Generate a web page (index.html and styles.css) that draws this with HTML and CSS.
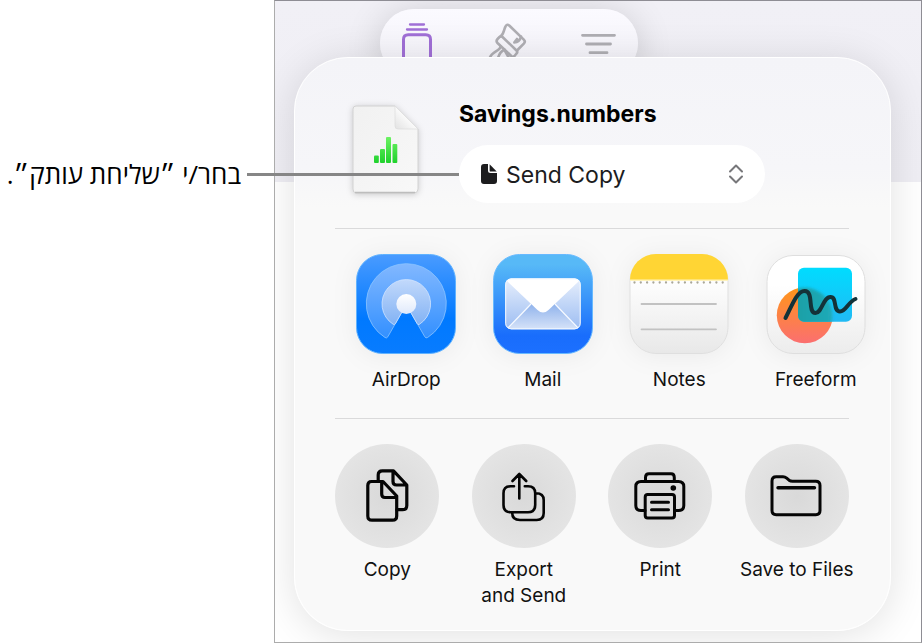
FILE: index.html
```html
<!DOCTYPE html>
<html lang="he">
<head>
<meta charset="utf-8">
<title>Savings.numbers</title>
<link rel="stylesheet" href="styles.css">
</head>
<body>
<main class="figure">
  <div class="callout">
    <p class="callout-text" dir="rtl">בחר/י ״שליחת עותק״.</p>
    <span class="leader"></span>
  </div>
  <div class="screen" lang="en">
    <div class="toolbar">
      <button type="button" class="tool tool-active" aria-label="Insert">
        <svg width="40" height="56" viewBox="0 0 40 56"><path d="M13 4.500H27M10 9.500H30" stroke-width="2.300"/><path d="M6.500 56V19.500Q6.500 14.700 11.300 14.700H28.700Q33.500 14.700 33.500 19.500V56" stroke-width="3"/></svg>
      </button>
      <button type="button" class="tool" aria-label="Format">
        <svg width="40" height="56" viewBox="0 0 40 56"><path d="M12.500 16.500C16 14 15.800 9.500 17.500 6.500Q19.100 3.400 21.500 5.700L35.800 19.600Q37.800 21.600 35.800 23.700L29.500 30"/><path d="M33 16.500Q31.500 22.500 26.300 22.500L29 19"/><path d="M10 18.500L11.500 17Q13 15.700 14.500 17L28.500 30.500Q30 32 28.500 33.500L26.500 36Q25 37.500 23.300 36L9.500 23Q7.500 21 10 18.500Z"/><path d="M12.500 26.500C12.500 31 4 31 2 37.500M16.500 29.500Q12 31.500 10 38M16.500 30L21 38"/></svg>
      </button>
      <button type="button" class="tool" aria-label="Organize">
        <svg width="40" height="56" viewBox="0 0 40 56"><path d="M4.500 15.300H36.500M8.500 24H32.500M12 32.700H29" stroke-width="2.800"/></svg>
      </button>
    </div>

    <section class="panel" aria-label="Share">
      <header class="document">
        <svg class="document-icon" width="67" height="89" viewBox="0 0 67 89" aria-hidden="true">
          <defs>
            <linearGradient id="paper" x2="1" y2="1"><stop offset="0" stop-color="#f1f1f1"/><stop offset="1" stop-color="#f8f8f8"/></linearGradient>
            <linearGradient id="fold" x1="0" y1="1" x2=".6" y2=".4"><stop offset="0" stop-color="#e2e2e2"/><stop offset="1" stop-color="#fff"/></linearGradient>
            <linearGradient id="bars" gradientUnits="userSpaceOnUse" x1="0" y1="32" x2="0" y2="58"><stop offset="0" stop-color="#6cf263"/><stop offset="1" stop-color="#1fd12c"/></linearGradient>
          </defs>
          <path d="M4 1H43L66 24V84Q66 88 62 88H4Q1 88 1 84V4Q1 1 4 1Z" fill="url(#paper)" stroke="#d2d2d2"/>
          <path d="M3 87.500H63" stroke="#bdbdbd" stroke-width="1.300"/>
          <path d="M43 1L66 24H46Q43 24 43 21Z" fill="url(#fold)" stroke="#dcdcdc" stroke-width=".7"/>
          <g fill="url(#bars)"><rect x="22" y="50.500" width="4.800" height="7.500" rx="1"/><rect x="28" y="44" width="5" height="14" rx="1"/><rect x="34" y="32" width="5" height="26" rx="1"/><rect x="40.500" y="39" width="4.800" height="19" rx="1"/></g>
        </svg>
        <div class="document-body">
          <h1 class="document-name">Savings.numbers</h1>
          <div class="mode">
            <svg class="mode-icon" width="16" height="20" viewBox="0 0 16 20" aria-hidden="true"><path d="M3 0H7V6.500Q7 9 9.500 9H16V17Q16 20 13 20H3Q0 20 0 17V3Q0 0 3 0Z"/><path d="M8.600 .3L15.700 7.600H9.800Q8.600 7.600 8.600 6.400Z"/></svg>
            <select class="mode-select" aria-label="Share mode"><option>Send Copy</option></select>
            <svg class="mode-chevrons" width="16" height="22" viewBox="0 0 16 22" aria-hidden="true"><path d="M2 8.500L8 2.500L14 8.500M2 13.500L8 19.500L14 13.500"/></svg>
          </div>
        </div>
      </header>

      <hr class="rule">

      <div class="grid apps">
        <button type="button" class="item">
          <svg class="app-icon" width="100" height="100" viewBox="0 0 100 100" aria-hidden="true">
            <defs>
              <linearGradient id="ad" x2="0" y2="1"><stop offset="0" stop-color="#4a9bff"/><stop offset=".65" stop-color="#0079ff"/><stop offset="1" stop-color="#087cff"/></linearGradient>
              <linearGradient id="ad1" x2="0" y2="1"><stop offset="0" stop-color="#82b8ff"/><stop offset="1" stop-color="#3390ff"/></linearGradient>
              <linearGradient id="ad2" x2="0" y2="1"><stop offset="0" stop-color="#c2d9fb"/><stop offset="1" stop-color="#82b2f4"/></linearGradient>
              <linearGradient id="ad3" x2="0" y2="1"><stop offset="0" stop-color="#fff"/><stop offset="1" stop-color="#dfe9fb"/></linearGradient>
            </defs>
            <rect x=".5" y=".5" width="99" height="99" rx="26" fill="url(#ad)" stroke="#5fb2ff"/>
            <path d="M31.800 82.800Q30.800 84.600 29 83.500A40 40 0 1 1 71.600 83.500Q69.800 84.600 68.800 82.800L54.500 58H46Z" fill="url(#ad1)" stroke="#8cc4ff" stroke-width=".8"/>
            <path d="M39.500 69.500Q38.800 71 37.200 70.300A24.300 24.300 0 1 1 63.400 70.300Q61.800 71 61.100 69.500L54.500 58H46Z" fill="url(#ad2)" stroke="#d2e5ff" stroke-width=".8"/>
            <circle cx="50.300" cy="50" r="10" fill="url(#ad3)"/>
          </svg>
          <span class="label">AirDrop</span>
        </button>
        <button type="button" class="item">
          <svg class="app-icon" width="100" height="100" viewBox="0 0 100 100" aria-hidden="true">
            <defs>
              <linearGradient id="ml" x2="0" y2="1"><stop offset="0.100" stop-color="#57b9f7"/><stop offset=".82" stop-color="#196dfc"/><stop offset="1" stop-color="#1c70ff"/></linearGradient>
              <linearGradient id="ml1" x2="0" y2="1"><stop offset="0" stop-color="#e7effc"/><stop offset="1" stop-color="#9bbcf2"/></linearGradient>
              <linearGradient id="ml2" x2="0" y2="1"><stop offset="0" stop-color="#90b3ec"/><stop offset="1" stop-color="#d8e4f9"/></linearGradient>
              <clipPath id="env"><rect x="12.200" y="24.500" width="75.500" height="50.800" rx="6"/></clipPath>
            </defs>
            <rect x=".5" y=".5" width="99" height="99" rx="26" fill="url(#ml)" stroke="#67b9ff"/>
            <g clip-path="url(#env)">
              <path d="M12 24H88V76H12Z" fill="url(#ml1)"/>
              <path d="M14 76L38 50H62L86 76Z" fill="url(#ml2)"/>
              <path d="M14 75L38 50M86 75L62 50" stroke="#f7faff" stroke-width="1.200"/>
              <path d="M12 24H88L85 28L55.500 56Q50 61 44.500 56L15 28Z" fill="#fff"/>
            </g>
            <rect x="12.700" y="25" width="74.500" height="49.800" rx="5.500" fill="none" stroke="#f4f9ff"/>
          </svg>
          <span class="label">Mail</span>
        </button>
        <button type="button" class="item">
          <svg class="app-icon" width="100" height="100" viewBox="0 0 100 100" aria-hidden="true">
            <defs>
              <linearGradient id="sheet" x2="0" y2="1"><stop offset=".3" stop-color="#fdfdfd"/><stop offset="1" stop-color="#e8e8e8"/></linearGradient>
              <clipPath id="nt"><rect x="1" y="0" width="98" height="100" rx="26"/></clipPath>
            </defs>
            <rect x="1" y=".5" width="98" height="99" rx="26" fill="url(#sheet)" stroke="#dfdfdf"/>
            <g clip-path="url(#nt)"><path d="M0 0H100V27H0Z" fill="#fff3bb"/><path d="M0 0H100V25.500H0Z" fill="#ffd534"/></g>
            <path d="M5.500 28.500H95" stroke="#aaa799" stroke-width="2.300" stroke-dasharray="0 6.300" stroke-linecap="round"/>
            <path d="M12.500 50H87M12.500 75.300H87" stroke="#c2c2c2" stroke-width="1.800" stroke-linecap="round"/>
          </svg>
          <span class="label">Notes</span>
        </button>
        <button type="button" class="item">
          <svg class="app-icon" width="100" height="100" viewBox="0 0 100 100" aria-hidden="true">
            <defs>
              <linearGradient id="ff" x2="0" y2="1"><stop offset=".3" stop-color="#fff"/><stop offset="1" stop-color="#ececec"/></linearGradient>
              <linearGradient id="ff1" x2="0" y2="1"><stop offset="0" stop-color="#ff9619"/><stop offset="1" stop-color="#fb6f70"/></linearGradient>
              <linearGradient id="ff2" x2="0" y2="1"><stop offset="0" stop-color="#00dcff"/><stop offset="1" stop-color="#21baf4"/></linearGradient>
              <linearGradient id="ff3" x2="1" y2="0"><stop offset="0" stop-color="#199a9c"/><stop offset="1" stop-color="#20aab8"/></linearGradient>
              <clipPath id="sq"><rect x="32" y="13.700" width="54" height="54" rx="6"/></clipPath>
              <filter id="soft"><feGaussianBlur stdDeviation="1.500"/></filter>
            </defs>
            <rect x="1" y="1.500" width="98" height="98" rx="26" fill="url(#ff)" stroke="#dedede"/>
            <circle cx="38.800" cy="61.300" r="28" fill="url(#ff1)"/>
            <rect x="32" y="13.700" width="54" height="54" rx="6" fill="url(#ff2)"/>
            <g clip-path="url(#sq)"><circle cx="38.800" cy="61.300" r="27.500" fill="url(#ff3)" filter="url(#soft)"/></g>
            <path d="M19.500 64C25 54 30.500 37 38.500 37C48.500 37 41 59 49.500 59C56 59 57 43 64.500 43C71.500 43 66.500 57.500 74 57.500C80 57.500 82 48 89.500 45" fill="none" stroke="#143238" stroke-width="4" stroke-linecap="round"/>
          </svg>
          <span class="label">Freeform</span>
        </button>
      </div>

      <hr class="rule">

      <div class="grid actions">
        <button type="button" class="item">
          <svg class="action-icon" width="104" height="104" viewBox="0 0 104 104" aria-hidden="true"><g stroke-width="3.200"><path d="M36.500 37.500H48L61.700 52V72Q61.700 76.200 57.500 76.200H37Q32.800 76.200 32.800 72V41.500Q32.800 37.500 36.500 37.500ZM46.700 38V50Q46.700 53.500 50 53.500H61.500"/><path d="M43.200 37V31Q43.200 26.800 47.400 26.800H58.500L71.800 41V61.500Q71.800 65.700 67.600 65.700H62M58 27.500V37.500Q58 41 61.500 41H71.500"/></g></svg>
          <span class="label">Copy</span>
        </button>
        <button type="button" class="item">
          <svg class="action-icon action-icon-light" width="104" height="104" viewBox="0 0 104 104" aria-hidden="true"><path d="M42 42.300H38.500Q31.500 42.300 31.500 49.300V61Q31.500 68.200 38.500 68.200H56Q63.200 68.200 63.200 61V49.300Q63.200 42.300 56 42.300H52.800M47.300 54.500V30M40.500 37L47.300 30L54.200 37M64 49.200Q71.700 49.200 71.700 56V69Q71.700 76 64.700 76H48Q40.200 76 40.200 69"/></svg>
          <span class="label">Export<br>and Send</span>
        </button>
        <button type="button" class="item">
          <svg class="action-icon" width="104" height="104" viewBox="0 0 104 104" aria-hidden="true"><path d="M37 66.500H33Q27.800 66.500 27.800 61.500V42.500Q27.800 37.500 33 37.500H70.500Q75.800 37.500 75.800 42.500V61.500Q75.800 66.500 70.500 66.500H67M37.500 37V33.500Q37.500 29.800 41 29.800H63Q66.300 29.800 66.300 33.500V37"/><rect x="37.200" y="50.500" width="29.300" height="23.500" rx="2.500"/><path d="M43.500 58.300H60.500M43.500 65.700H60.500"/><circle class="dot" cx="65.300" cy="44" r="2.800"/></svg>
          <span class="label">Print</span>
        </button>
        <button type="button" class="item">
          <svg class="action-icon" width="104" height="104" viewBox="0 0 104 104" aria-hidden="true"><path d="M27 37Q27 32.800 31.200 32.800H38Q40 32.800 41.700 34.200L44 36.200Q45.500 37.300 47.500 37.300H70.800Q75 37.300 75 41.500V66.500Q75 70.700 70.800 70.700H31.200Q27 70.700 27 66.500Z"/><path d="M33 43.700H69.500" stroke-width="3.400"/></svg>
          <span class="label">Save to Files</span>
        </button>
      </div>
    </section>
  </div>
</main>
</body>
</html>
```
FILE: styles.css
```css
* {
  box-sizing: border-box;
}

body {
  margin: 0;
  background: #fff;
  color: #000;
  font-family: Inter, "Liberation Sans", sans-serif;
}

.figure {
  display: flex;
  align-items: flex-start;
  padding-right: 1px;
}

.callout {
  position: relative;
  flex: none;
  width: 274px;
  padding: 158px 33px 0 0;
}

.callout-text {
  margin: 0;
  font-family: "Open Sans", "Liberation Sans", sans-serif;
  font-size: 26px;
  line-height: 32px;
  white-space: nowrap;
}

/* Pointer running from the caption to the mode menu */
.leader {
  position: absolute;
  z-index: 3;
  top: 173px;
  left: 247px;
  width: 212px;
  height: 3px;
  background: #868686;
}

.screen {
  flex: 1;
  min-width: 0;
  overflow: hidden;
  padding: 8px 30px 11px 19px;
  border: 1px solid #acacac;
  border-top-color: #8e8d94;
  border-right-color: #8e8d94;
  background: linear-gradient(#f1f0f6, #efeef4 181px, #fff 181px);
}

.toolbar {
  display: flex;
  justify-content: space-between;
  width: 258px;
  height: 68px;
  margin-left: 86px;
  padding: 11px 20px 0 17px;
  border-radius: 34px;
  background: linear-gradient(#fbfaff, #f5f4fa 48px);
  box-shadow: 0 4px 36px rgba(0, 0, 0, 0.16);
}

.tool {
  display: block;
  height: 56px;
  padding: 0;
  border: 0;
  background: none;
  color: #afaeb3;
}

.tool-active {
  color: #a06fd6;
}

.tool svg {
  display: block;
  fill: none;
  stroke: currentColor;
  stroke-width: 2.6;
  stroke-linecap: round;
  stroke-linejoin: round;
}

.panel {
  position: relative;
  margin-top: -20px;
  padding: 41px 41px 21px 40px;
  border: 1px solid #fff;
  border-radius: 54px;
  background: linear-gradient(#f4f4f8, #f6f6f9 110px, #f9f9f9 150px, #f9f9f9);
  box-shadow: 0 4px 40px rgba(0, 0, 0, 0.12);
}

.document {
  display: flex;
  gap: 40px;
  padding-left: 17px;
}

.document-icon {
  flex: none;
  margin-top: 6px;
  filter: drop-shadow(0 1px 3px rgba(0, 0, 0, 0.18));
}

.document-body {
  flex: 0 1 306px;
}

.document-name {
  margin: 0 0 16px;
  font-size: 23px;
  font-weight: 700;
  line-height: 30px;
}

.mode {
  position: relative;
}

.mode-select {
  display: block;
  width: 100%;
  height: 58px;
  padding: 2px 47px 0;
  border: 0;
  border-radius: 29px;
  background: #fff;
  color: #1c1c1e;
  font: 23px Inter, "Liberation Sans", sans-serif;
  appearance: none;
}

.mode-icon,
.mode-chevrons {
  position: absolute;
  top: 50%;
  transform: translateY(-50%);
  pointer-events: none;
}

.mode-icon {
  left: 22px;
  fill: #1c1c1e;
}

.mode-chevrons {
  right: 21px;
  fill: none;
  stroke: #77777a;
  stroke-width: 2;
  stroke-linecap: round;
  stroke-linejoin: round;
}

.rule {
  height: 1px;
  margin: 25px 0;
  border: 0;
  background: #dadadb;
}

.grid {
  display: grid;
  grid-template-columns: repeat(4, 1fr);
}

.apps {
  margin: 0 -35px 0 3px;
}

.actions {
  margin: 0 -16px;
}

.item {
  display: flex;
  flex-direction: column;
  align-items: center;
  padding: 0;
  border: 0;
  background: none;
  color: #111;
  font: 19px/26px Inter, "Liberation Sans", sans-serif;
}

.app-icon {
  margin-bottom: 13px;
  filter: drop-shadow(0 2px 12px rgba(0, 0, 0, 0.06));
}

.action-icon {
  margin-bottom: 9px;
  border-radius: 50%;
  background: radial-gradient(#d9d9d9, #e4e4e4 70%);
  fill: none;
  stroke: #050505;
  stroke-width: 3;
  stroke-linecap: round;
  stroke-linejoin: round;
}

.action-icon-light {
  stroke-width: 2.6;
}

.dot {
  fill: #050505;
  stroke: none;
}

.label {
  white-space: nowrap;
}
```
